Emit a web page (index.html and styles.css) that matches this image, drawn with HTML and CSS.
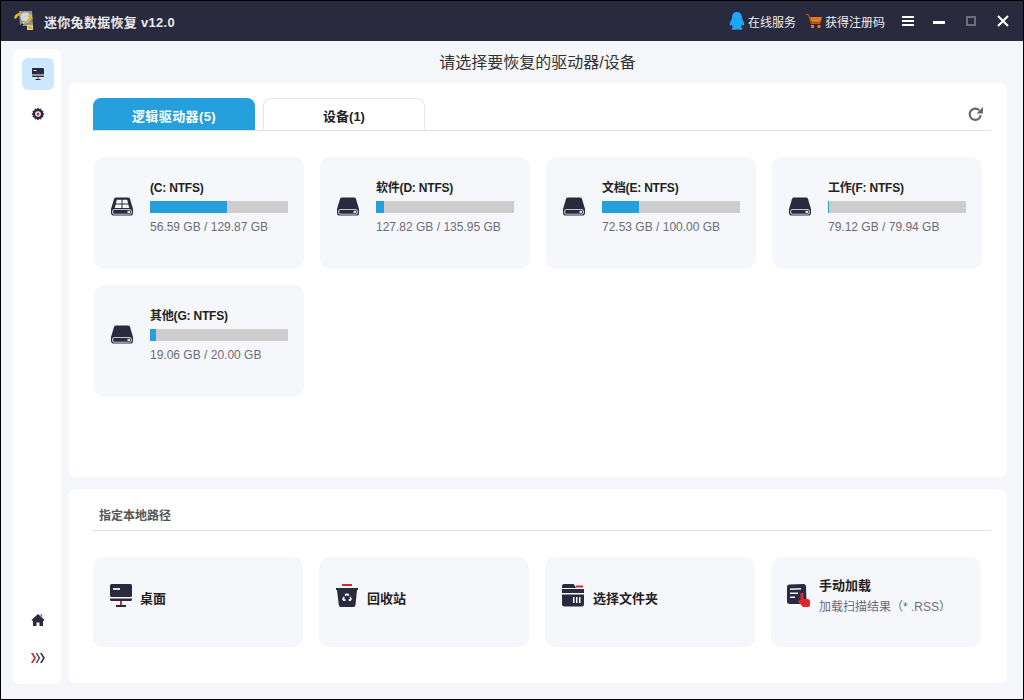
FILE: index.html
```html
<!DOCTYPE html>
<html lang="en">
<head>
    <meta charset="UTF-8">
    <title>迷你兔数据恢复</title>
    <link rel="stylesheet" href="styles.css">
</head>
<body>
    <svg class="defs" width="0" height="0">
        <symbol id="disk" viewBox="0 0 24 20" preserveAspectRatio="none">
            <path d="M6 .5h12q1.500 0 2 1.500l3 10.500v4q0 3-3 3H4q-3 0-3-3v-4L4 2Q4.500 .5 6 .5z" fill="#2a2a3e"/>
            <rect x="2.300" y="13" width="19.400" height="5.500" rx="1.800" fill="#f6f7fa"/>
            <rect x="3.200" y="13.800" width="17.600" height="3.800" rx="1" fill="#2a2a3e"/>
            <rect x="17.500" y="14.500" width="2.500" height="2.300" fill="#dfe0e6"/>
        </symbol>
    </svg>

    <header class="titlebar">
        <svg class="logo" width="22" height="22" viewBox="0 0 22 22">
            <path d="M6 1h13l1 15H7z" fill="#8d9299"/>
            <ellipse cx="12.500" cy="7" rx="5" ry="4.500" fill="#d4d7dc"/>
            <path d="M1 8q1-5 7-5v2l-2 .500q-2 1-3 3.500z" fill="#e8b62a"/>
            <path d="M9 12q5 1 7-5l-2-1 5-2 .5 5-1.500-.5q-2 6-9 5z" fill="#e8b62a"/>
            <path d="M2 21l9-10 1.500 1.500-9 9z" fill="#23232f"/>
            <path d="M9 13l2-2 1.500 1.500-2 2z" fill="#c9ccd2"/>
            <rect x="14" y="15" width="6" height="5" fill="#e8d27a"/>
            <rect x="15.500" y="16.500" width="3" height="2" fill="#caa028"/>
        </svg>
        <div class="app-title">迷你兔数据恢复 v12.0</div>
        <div class="title-actions">
            <svg class="qq" width="16" height="18" viewBox="0 0 16 18">
                <path d="M8 0c3.500 0 5 2.500 5 5.500 0 1 .2 1.500 .8 2.500 1 1.700 1.700 3.500 1.200 5.500-.5 .5-1.200-.2-1.700-1-.2 1.200-.7 2-1.500 2.800 1 .4 1.700 .9 1.700 1.500 0 .8-2 1.200-3.500 1-.7-.1-1.400-.4-2-.6-.6 .2-1.300 .5-2 .6-1.500 .2-3.500-.2-3.500-1 0-.6 .7-1.100 1.700-1.500-.8-.8-1.300-1.600-1.500-2.800-.5 .8-1.200 1.500-1.700 1-.5-2 .2-3.800 1.200-5.500 .6-1 .8-1.500 .8-2.500C3 2.500 4.500 0 8 0z" fill="#1fa5f5"/>
            </svg>
            <span class="action-text">在线服务</span>
            <svg class="cart" width="16" height="14" viewBox="0 0 16 14">
                <path d="M0 .5h2.500L5 9.500h9.500" fill="none" stroke="#b4601c"/>
                <path d="M4 3h12l-1.500 5.500H5.500z" fill="#e8751a"/>
                <rect x="5" y="11" width="3" height="3" fill="#e8751a"/>
                <rect x="11.500" y="11" width="3" height="3" fill="#e8751a"/>
            </svg>
            <span class="action-text">获得注册码</span>
            <div class="menu-icon"><i></i><i></i><i></i></div>
            <div class="win-min"></div>
            <div class="win-max"></div>
            <svg class="win-close" width="12" height="12" viewBox="0 0 12 12">
                <path d="M1 1l10 10M11 1L1 11" stroke="#fff" stroke-width="2"/>
            </svg>
        </div>
    </header>

    <div class="app-body">
        <nav class="sidebar">
            <div class="nav-btn active">
                <svg width="14" height="14" viewBox="0 0 14 14">
                    <rect x="1" y="1" width="12" height="9" rx="1" fill="#2a2a3e"/>
                    <rect x="1" y="7.500" width="12" height="1" fill="#fff"/>
                    <rect x="2.500" y="3" width="3" height="1" fill="#dfe0e6"/>
                    <rect x="6.500" y="10" width="1" height="2" fill="#e0262c"/>
                    <rect x="4.500" y="12" width="5" height="1" fill="#2a2a3e"/>
                </svg>
            </div>
            <div class="nav-btn gear">
                <svg width="14" height="14" viewBox="0 0 14 14">
                    <path d="M7 .5l1.200 1.500 1.900-.5 .5 1.900 1.900 .5-.5 1.900L13.500 7l-1.500 1.200 .5 1.900-1.900 .5-.5 1.900-1.900-.5L7 13.500l-1.200-1.500-1.900 .5-.5-1.900-1.900-.5 .5-1.900L.5 7 2 5.800l-.5-1.900 1.900-.5 .5-1.900 1.900 .5z" fill="#2a2a3e"/>
                    <circle cx="7" cy="7" r="2.800" fill="#fff"/>
                    <circle cx="7" cy="7" r="1.500" fill="#e0262c"/>
                </svg>
            </div>
            <div class="nav-spacer"></div>
            <div class="nav-btn">
                <svg width="14" height="14" viewBox="0 0 14 14">
                    <path d="M7 1l6.500 6-.7 .8H12V13H8.500V9.500h-3V13H2V7.800H1.200L.5 7z" fill="#2a2a3e"/>
                    <path d="M9 1.500h2.200v3z" fill="#e0262c"/>
                </svg>
            </div>
            <div class="nav-btn">
                <svg width="14" height="10" viewBox="0 0 14 10">
                    <path d="M0 0h2l3 5-3 5H0l3-5z" fill="#e0262c"/>
                    <path d="M4.500 0h1.800l3 5-3 5H4.500l3-5z" fill="#55555f"/>
                    <path d="M9 0h1.800l3 5-3 5H9l3-5z" fill="#2a2a3e"/>
                </svg>
            </div>
        </nav>

        <main class="content">
            <div class="page-title">请选择要恢复的驱动器/设备</div>

            <section class="panel drives-panel">
                <div class="tabs">
                    <div class="tab current">逻辑驱动器(5)</div>
                    <div class="tab">设备(1)</div>
                    <svg class="refresh" width="17" height="17" viewBox="0 0 16 16">
                        <path d="M13 8.500A5.300 5.300 0 1 1 11.500 4" fill="none" stroke="#666" stroke-width="2"/>
                        <path d="M15 1v6h-6z" fill="#666"/>
                    </svg>
                </div>
                <div class="drive-grid">
                    <div class="drive-card">
                        <svg class="drive-icon" width="24" height="19" viewBox="0 0 24 20" preserveAspectRatio="none">
                            <use href="#disk"/>
                            <path d="M6.800 3h4.700v3.800H5.900zM12.500 3h4.700l.9 3.800h-5.600zM5.700 7.800h5.800V11.500H4.700zM12.500 7.800h5.800l1 3.700h-6.800z" fill="#f6f7fa"/>
                        </svg>
                        <div class="drive-info">
                            <div class="drive-name">(C: NTFS)</div>
                            <div class="bar"><div class="bar-fill" style="width: 56%"></div></div>
                            <div class="drive-size">56.59 GB / 129.87 GB</div>
                        </div>
                    </div>
                    <div class="drive-card">
                        <svg class="drive-icon" width="24" height="19"><use href="#disk"/></svg>
                        <div class="drive-info">
                            <div class="drive-name">软件(D: NTFS)</div>
                            <div class="bar"><div class="bar-fill" style="width: 6%"></div></div>
                            <div class="drive-size">127.82 GB / 135.95 GB</div>
                        </div>
                    </div>
                    <div class="drive-card">
                        <svg class="drive-icon" width="24" height="19"><use href="#disk"/></svg>
                        <div class="drive-info">
                            <div class="drive-name">文档(E: NTFS)</div>
                            <div class="bar"><div class="bar-fill" style="width: 27%"></div></div>
                            <div class="drive-size">72.53 GB / 100.00 GB</div>
                        </div>
                    </div>
                    <div class="drive-card">
                        <svg class="drive-icon" width="24" height="19"><use href="#disk"/></svg>
                        <div class="drive-info">
                            <div class="drive-name">工作(F: NTFS)</div>
                            <div class="bar"><div class="bar-fill" style="width: 1%"></div></div>
                            <div class="drive-size">79.12 GB / 79.94 GB</div>
                        </div>
                    </div>
                    <div class="drive-card">
                        <svg class="drive-icon" width="24" height="19"><use href="#disk"/></svg>
                        <div class="drive-info">
                            <div class="drive-name">其他(G: NTFS)</div>
                            <div class="bar"><div class="bar-fill" style="width: 4%"></div></div>
                            <div class="drive-size">19.06 GB / 20.00 GB</div>
                        </div>
                    </div>
                </div>
            </section>

            <section class="panel paths-panel">
                <div class="paths-title">指定本地路径</div>
                <div class="path-grid">
                    <div class="path-card">
                        <svg width="22" height="23" viewBox="0 0 22 23">
                            <rect x="0" y="0" width="22" height="13" rx="1.500" fill="#2a2a3e"/>
                            <rect x="0" y="13" width="22" height="4" rx="1.500" fill="#2a2a3e"/>
                            <rect x="0" y="13" width="22" height="1.500" fill="#f6f7fa"/>
                            <rect x="3" y="4" width="7" height="2" fill="#dfe0e6"/>
                            <rect x="10" y="17" width="2" height="4" fill="#e0262c"/>
                            <rect x="6" y="21" width="10" height="2" fill="#2a2a3e"/>
                        </svg>
                        <div class="path-name">桌面</div>
                    </div>
                    <div class="path-card">
                        <svg width="23" height="23" viewBox="0 0 23 23">
                            <rect x="6" y="0" width="10" height="2" fill="#e0262c"/>
                            <path d="M0 4h22v2h-1l-1.500 15q-.2 2-2 2H5q-2 0-2.200-2L1 6H0z" fill="#2a2a3e"/>
                            <path d="M9.500 9.500h3l1 1.800-1.600 .9-.9-1.500-.9 1.500-1.600-.9zM14.500 12.500l1.500 2.600-1.300 2h-2v-2h1l.6-1-1.200-.7zM7.500 12.500l1.400 .9-.6 1.700h1.200v2h-2.200l-1.300-2z" fill="#f0f1f4"/>
                        </svg>
                        <div class="path-name">回收站</div>
                    </div>
                    <div class="path-card">
                        <svg width="23" height="23" viewBox="0 0 23 23">
                            <path d="M2 0h9q1 0 1.500 1l1.500 3h-14V2q0-2 2-2z" fill="#2a2a3e"/>
                            <rect x="14" y="1.500" width="7" height="2" fill="#e0262c"/>
                            <rect x="0" y="5" width="22" height="4" fill="#2a2a3e"/>
                            <path d="M0 10.500h22V20q0 2.500-2.500 2.500h-17Q0 22.500 0 20z" fill="#2a2a3e"/>
                            <path d="M11 13h1.500v6H11zM14 13h1.500v6H14zM17 13h1.500v6H17z" fill="#f6f7fa"/>
                        </svg>
                        <div class="path-name">选择文件夹</div>
                    </div>
                    <div class="path-card">
                        <svg class="load-icon" width="24" height="24" viewBox="0 0 24 24">
                            <path d="M2.500 .5l14-.5q2.500 0 2.500 2.500l.5 15q0 2.500-2.500 2.500h-14Q0 20 0 17.500V3q0-2.500 2.500-2.500z" fill="#2a2a3e"/>
                            <path d="M3 4.500l11-.5v1.500l-11 .5zM3 8.500h8V10H3zM3 12.500h5V14H3z" fill="#f0f1f4"/>
                            <path d="M13.500 9h3v6h4q2.500 0 2.500 2.500v3.500q0 2-2 2h-5L10.500 17l3-1z" fill="#e0262c"/>
                        </svg>
                        <div class="path-text">
                            <div class="path-name">手动加载</div>
                            <div class="path-sub">加载扫描结果（* .RSS）</div>
                        </div>
                    </div>
                </div>
            </section>
        </main>
    </div>
</body>
</html>
```

FILE: styles.css
```css
* {
    box-sizing: border-box;
}
html, body {
    height: 100%;
}
body {
    margin: 0;
    height: 700px;
    display: flex;
    flex-direction: column;
    overflow: hidden;
    border: 1px solid #000;
    background-color: #f5f6fa;
    font-family: "Liberation Sans", "Noto Sans CJK SC", sans-serif;
    font-size: 12px;
    color: #222;
}
.defs {
    position: absolute;
}
.titlebar {
    flex: none;
    height: 40px;
    display: flex;
    align-items: center;
    padding: 0 12px;
    background-color: #2a2a3e;
    color: #fff;
}
.logo {
    margin-right: 9px;
}
.app-title {
    font-size: 13px;
    font-weight: bold;
    letter-spacing: .3px;
    color: #e9e9ef;
}
.title-actions {
    margin-left: auto;
    display: flex;
    align-items: center;
}
.qq {
    margin-right: 3px;
}
.action-text {
    font-size: 12px;
    color: #eee;
}
.cart {
    margin-left: 10px;
    margin-right: 3px;
}
.menu-icon {
    margin-left: 17px;
    width: 12px;
    display: flex;
    flex-direction: column;
    gap: 2px;
}
.menu-icon i {
    display: block;
    height: 2px;
    background-color: #fff;
}
.win-min {
    margin-left: 19px;
    width: 12px;
    height: 3px;
    margin-top: 3px;
    background-color: #fff;
}
.win-max {
    margin-left: 21px;
    width: 10px;
    height: 10px;
    border: 2px solid #6e6e7a;
}
.win-close {
    margin-left: 21px;
    margin-right: 2px;
}
.app-body {
    flex: 1;
    display: flex;
    padding: 8px 16px 15px 12px;
    gap: 8px;
    min-height: 0;
}
.sidebar {
    flex: none;
    width: 48px;
    display: flex;
    flex-direction: column;
    align-items: center;
    padding: 9px 0 10px 2px;
    gap: 6px;
    background-color: #fff;
    border-radius: 6px;
}
.nav-btn {
    width: 32px;
    height: 32px;
    display: flex;
    align-items: center;
    justify-content: center;
    border-radius: 6px;
}
.nav-btn.active {
    background-color: #cde7fd;
}
.nav-btn.gear {
    margin-top: 2px;
}
.nav-spacer {
    flex: 1;
}
.content {
    flex: 1;
    min-width: 0;
    display: flex;
    flex-direction: column;
}
.page-title {
    height: 34px;
    padding: 0 1px 10px 0;
    display: flex;
    align-items: center;
    justify-content: center;
    font-size: 16px;
    color: #333;
}
.panel {
    background-color: #fff;
    border-radius: 6px;
}
.drives-panel {
    height: 394px;
    padding: 15px 16px 0 24px;
}
.tabs {
    height: 33px;
    display: flex;
    align-items: flex-end;
    gap: 8px;
    border-bottom: 1px solid #e0e0e0;
}
.tab {
    width: 162px;
    height: 32px;
    display: flex;
    align-items: center;
    justify-content: center;
    padding-top: 2px;
    font-size: 13px;
    font-weight: bold;
    border: 1px solid #e6e6e6;
    border-bottom: none;
    border-radius: 8px 8px 0 0;
}
.tab.current {
    border: none;
    letter-spacing: .4px;
    background-color: #26a0dc;
    color: #fff;
}
.refresh {
    margin-left: auto;
    margin-right: 7px;
    align-self: center;
}
.drive-grid {
    display: grid;
    grid-template-columns: repeat(4, 210px);
    grid-auto-rows: 112px;
    gap: 16px;
    padding: 26px 0 0 1px;
}
.drive-card {
    display: flex;
    align-items: flex-start;
    padding: 24px 16px 0;
    background-color: #f6f7fa;
    border-radius: 10px;
}
.drive-icon {
    flex: none;
    margin-top: 16px;
    margin-right: 16px;
}
.drive-info {
    width: 138px;
}
.drive-name {
    height: 14px;
    line-height: 14px;
    font-size: 12px;
    font-weight: bold;
    letter-spacing: -.2px;
    color: #222;
}
.bar {
    margin-top: 6px;
    height: 12px;
    background-color: #cdcdcd;
}
.bar-fill {
    height: 100%;
    background-color: #26a0dc;
}
.drive-size {
    margin-top: 7px;
    line-height: 15px;
    font-size: 12px;
    color: #6c6c78;
}
.paths-panel {
    height: 194px;
    margin-top: 12px;
    padding: 0 16px 0 24px;
}
.paths-title {
    height: 42px;
    padding: 19px 0 0 6px;
    line-height: 16px;
    font-size: 12px;
    font-weight: bold;
    color: #555;
    border-bottom: 1px solid #e0e0e0;
}
.path-grid {
    display: grid;
    grid-template-columns: repeat(4, 210px);
    grid-auto-rows: 90px;
    gap: 16px;
    padding-top: 26px;
}
.path-card {
    display: flex;
    align-items: flex-start;
    padding: 27px 16px 0 17px;
    background-color: #f6f7fa;
    border-radius: 10px;
}
.path-card svg {
    flex: none;
    margin-right: 8px;
}
.path-card .load-icon {
    margin-left: -1px;
}
.path-name {
    margin-top: 7px;
    line-height: 16px;
    font-size: 13px;
    font-weight: bold;
    color: #222;
}
.path-text .path-name {
    margin-top: -6px;
}
.path-sub {
    margin-top: 6px;
    line-height: 15px;
    font-size: 12px;
    color: #6c6c78;
}
```
